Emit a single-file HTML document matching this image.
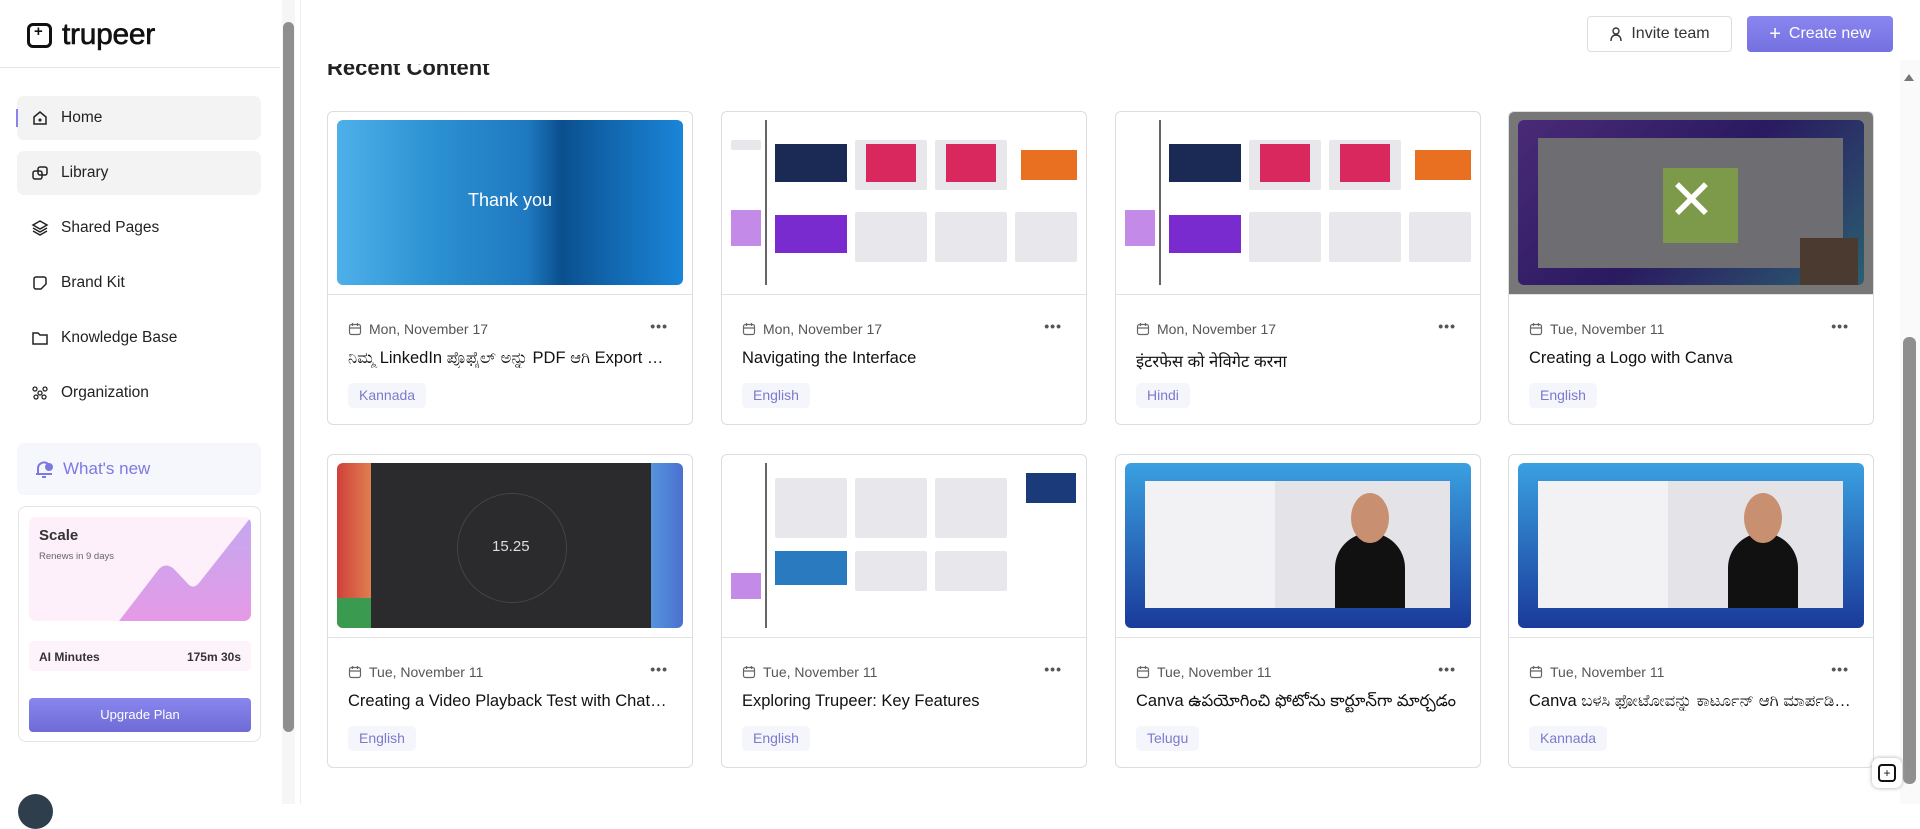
<!DOCTYPE html>
<html><head><meta charset="utf-8"><style>
*{box-sizing:border-box;margin:0;padding:0}
body{width:1920px;height:804px;overflow:hidden;background:#fff;font-family:"Liberation Sans","Noto Sans CJK SC",sans-serif;color:#111;position:relative}
.sb{position:absolute;left:0;top:0;width:281px;height:804px;background:#fff}
.logo{position:absolute;left:27px;top:18px;display:flex;align-items:center;gap:10px;font-size:30px;letter-spacing:-0.3px;color:#111;-webkit-text-stroke:0.6px #111}
.logo .ic{width:25px;height:25px;border:3px solid #111;border-radius:6px;position:relative;-webkit-text-stroke:0}
.logo .ic:after{content:"+";position:absolute;left:4px;top:-3px;font-size:15px;font-weight:bold}
.hl{position:absolute;left:0;top:67px;width:280px;border-top:1px solid #e5e5e5}
.nav{position:absolute;left:17px;width:244px;height:44px;border-radius:7px;display:flex;align-items:center;font-size:15.5px;color:#222}
.nav svg{position:absolute;left:14px;width:18px;height:18px}
.nav span{position:absolute;left:44px}
.act{background:#f3f3f4}
.bar:before{content:"";position:absolute;left:-1px;top:13px;height:18px;width:2px;background:#8b83e8}
.wn{position:absolute;left:17px;top:443px;width:244px;height:52px;border-radius:7px;background:#f6f6fd;color:#7d79e0;font-size:17px;display:flex;align-items:center}
.card0{position:absolute;left:18px;top:506px;width:243px;height:236px;border:1px solid #e4e4e4;border-radius:8px}
.sc{position:absolute;left:10px;top:10px;width:222px;height:104px;border-radius:7px;background:#fdf0fa;overflow:hidden}
.ai{position:absolute;left:10px;top:134px;width:222px;height:30px;background:#fdf4fb;border-radius:4px;font-size:12px;font-weight:bold;color:#333}
.up{position:absolute;left:10px;top:191px;width:222px;height:34px;border-radius:4px;background:linear-gradient(#8a86ef,#6f6bd6);color:#fff;font-size:13px;text-align:center;line-height:34px}
.scroll{position:absolute;left:282px;top:0;width:13px;height:804px;background:#f6f6f6}
.thumb{position:absolute;left:283px;top:22px;width:11px;height:710px;background:#8f8f8f;border-radius:6px}
.main{position:absolute;left:300px;top:0;width:1600px;height:804px;border-left:1px solid #eee}
.rc{position:absolute;left:327px;top:55px;font-size:22px;font-weight:bold;color:#222}
.hdr{position:absolute;left:301px;top:0;width:1599px;height:64px;background:#fff}
.btn{position:absolute;top:16px;height:36px;border-radius:4px;font-size:16px;display:flex;align-items:center;justify-content:center;gap:8px}
.card{position:absolute;width:366px;height:314px;border:1px solid #ddd;border-radius:6px;background:#fff;overflow:hidden}
.th{position:absolute;left:9px;top:8px;width:346px;height:165px;border-radius:6px;overflow:hidden}
.dv{position:absolute;left:0;top:182px;width:100%;border-top:1px solid #e3e3e3}
.dt{position:absolute;left:20px;top:209px;font-size:14px;color:#555;display:flex;align-items:center;gap:7px}
.dots{position:absolute;right:24px;top:206px;font-size:14px;color:#555;letter-spacing:1px;font-weight:bold}
.tt{position:absolute;left:20px;top:237px;font-size:16.5px;color:#111;white-space:nowrap;width:325px;overflow:hidden;text-overflow:ellipsis}
.tg{position:absolute;left:20px;top:271px;height:25px;padding:0 11px;border-radius:5px;background:#f5f5fc;color:#7d79cc;font-size:14px;line-height:25px}
.rs{position:absolute;left:1900px;top:60px;width:20px;height:744px;background:#fafafa}
.rt{position:absolute;left:1903px;top:337px;width:13px;height:447px;background:#8f8f8f;border-radius:6px}
.b{position:absolute;background:#e8e8ec;border-radius:2px}
</style></head><body>
<svg width="0" height="0" style="position:absolute"><defs><symbol id="cal" viewBox="0 0 14 14"><rect x="1.5" y="2.5" width="11" height="10" rx="2" fill="none" stroke="#666" stroke-width="1.2"/><path d="M1.5 6h11M4.5 1v3M9.5 1v3" stroke="#666" stroke-width="1.2"/></symbol></defs></svg>
<div class="sb">
<div class="logo"><div class="ic"></div>trupeer</div>
<div class="hl"></div>
<div class="nav act bar" style="top:96px"><svg viewBox="0 0 18 18" fill="none" stroke="#222" stroke-width="1.5"><path d="M3 8l6-5 6 5v7H3z"/><circle cx="9" cy="11" r=".8" fill="#222"/></svg><span>Home</span></div>
<div class="nav act" style="top:151px"><svg viewBox="0 0 18 18" fill="none" stroke="#222" stroke-width="1.5"><rect x="2" y="7" width="9" height="8" rx="2"/><rect x="7" y="3" width="9" height="8" rx="2"/></svg><span>Library</span></div>
<div class="nav" style="top:206px"><svg viewBox="0 0 18 18" fill="none" stroke="#222" stroke-width="1.5"><path d="M9 2l7 4-7 4-7-4z M2 9l7 4 7-4 M2 12l7 4 7-4"/></svg><span>Shared Pages</span></div>
<div class="nav" style="top:261px"><svg viewBox="0 0 18 18" fill="none" stroke="#222" stroke-width="1.5"><path d="M3 5a2 2 0 012-2h8a2 2 0 012 2v5l-5 5H5a2 2 0 01-2-2z"/></svg><span>Brand Kit</span></div>
<div class="nav" style="top:316px"><svg viewBox="0 0 18 18" fill="none" stroke="#222" stroke-width="1.5"><path d="M2 4h5l2 2h7v9H2z"/></svg><span>Knowledge Base</span></div>
<div class="nav" style="top:371px"><svg viewBox="0 0 18 18" fill="none" stroke="#222" stroke-width="1.3"><circle cx="4" cy="5" r="2"/><circle cx="14" cy="5" r="2"/><circle cx="9" cy="9" r="2"/><circle cx="5" cy="13" r="2"/><circle cx="13" cy="13" r="2"/></svg><span>Organization</span></div>
<div class="wn"><svg style="position:absolute;left:16px" width="22" height="22" viewBox="0 0 22 22" fill="none" stroke="#7d79e0" stroke-width="2"><path d="M5 15V10a6 6 0 0110-4M3 16h16M9 19h4"/><circle cx="16" cy="9" r="3" fill="#7d79e0"/></svg><span style="position:absolute;left:46px">What's new</span></div>
<div class="card0">
<div class="sc"><svg style="position:absolute;left:0;top:0" width="222" height="104"><defs><linearGradient id="g" x1="0" y1="0" x2="0" y2="1"><stop offset="0" stop-color="#c3a8f0"/><stop offset="1" stop-color="#e59ae6"/></linearGradient></defs><path d="M90 104L130 52Q137 45 145 52L160 68Q165 72 170 66L222 0V104Z" fill="url(#g)"/></svg>
<div style="position:absolute;left:10px;top:10px;font-size:15px;font-weight:bold;color:#333">Scale</div>
<div style="position:absolute;left:10px;top:34px;font-size:9.5px;color:#666">Renews in 9 days</div></div>
<div class="ai"><span style="position:absolute;left:10px;top:9px">AI Minutes</span><span style="position:absolute;right:10px;top:9px">175m 30s</span></div>
<div class="up">Upgrade Plan</div>
</div>
<div style="position:absolute;left:18px;top:794px;width:35px;height:35px;border-radius:50%;background:#2f3e4c"></div>
</div>
<div class="scroll"></div><div class="thumb"></div>
<div class="main"></div>
<div class="rc">Recent Content</div>
<div class="hdr"></div>
<div class="btn" style="left:1587px;width:145px;border:1px solid #ddd;color:#333"><svg width="14" height="16" viewBox="0 0 14 16" fill="none" stroke="#333" stroke-width="1.4"><circle cx="7" cy="5" r="3"/><path d="M2 15c0-4 2-6 5-6s5 2 5 6"/></svg>Invite team</div>
<div class="btn" style="left:1747px;width:146px;background:linear-gradient(#8a86ef,#7470e0);color:#fff"><span style="font-size:20px">+</span>Create new</div>

<!-- row 1 -->
<div class="card" style="left:327px;top:111px"><div class="th" style="background:linear-gradient(90deg,#4db0ea,#2a8fd0 30%,#1f79c0 55%,#0a4f8e 65%,#1268b0 80%,#1a85d8);"><div style="position:absolute;width:100%;top:70px;text-align:center;color:#fff;font-size:18px">Thank you</div></div><div class="dv"></div><div class="dt"><svg width="14" height="14"><use href="#cal"/></svg>Mon, November 17</div><div class="dots">•••</div><div class="tt">ನಿಮ್ಮ LinkedIn ಪ್ರೊಫೈಲ್ ಅನ್ನು PDF ಆಗಿ Export ಮಾಡುವುದು</div><div class="tg">Kannada</div></div>
<div class="card" style="left:721px;top:111px"><div class="th" style="background:#fff"><div style="position:absolute;left:34px;top:0;width:2px;height:165px;background:#666"></div><div style="position:absolute;left:44px;top:24px;width:72px;height:38px;background:#1b2a55"></div><div class="b" style="left:124px;top:20px;width:72px;height:50px"></div><div style="position:absolute;left:135px;top:24px;width:50px;height:38px;background:#d8285e"></div><div class="b" style="left:204px;top:20px;width:72px;height:50px"></div><div style="position:absolute;left:215px;top:24px;width:50px;height:38px;background:#d8285e"></div><div style="position:absolute;left:290px;top:30px;width:56px;height:30px;background:#e87020"></div><div style="position:absolute;left:44px;top:95px;width:72px;height:38px;background:#7a2bd0"></div><div class="b" style="left:124px;top:92px;width:72px;height:50px"></div><div class="b" style="left:204px;top:92px;width:72px;height:50px"></div><div class="b" style="left:284px;top:92px;width:62px;height:50px"></div><div style="position:absolute;left:0;top:90px;width:30px;height:36px;background:#c48ae8"></div><div class="b" style="left:0;top:20px;width:30px;height:10px"></div></div><div class="dv"></div><div class="dt"><svg width="14" height="14"><use href="#cal"/></svg>Mon, November 17</div><div class="dots">•••</div><div class="tt">Navigating the Interface</div><div class="tg">English</div></div>
<div class="card" style="left:1115px;top:111px"><div class="th" style="background:#fff"><div style="position:absolute;left:34px;top:0;width:2px;height:165px;background:#666"></div><div style="position:absolute;left:44px;top:24px;width:72px;height:38px;background:#1b2a55"></div><div class="b" style="left:124px;top:20px;width:72px;height:50px"></div><div style="position:absolute;left:135px;top:24px;width:50px;height:38px;background:#d8285e"></div><div class="b" style="left:204px;top:20px;width:72px;height:50px"></div><div style="position:absolute;left:215px;top:24px;width:50px;height:38px;background:#d8285e"></div><div style="position:absolute;left:290px;top:30px;width:56px;height:30px;background:#e87020"></div><div style="position:absolute;left:44px;top:95px;width:72px;height:38px;background:#7a2bd0"></div><div class="b" style="left:124px;top:92px;width:72px;height:50px"></div><div class="b" style="left:204px;top:92px;width:72px;height:50px"></div><div class="b" style="left:284px;top:92px;width:62px;height:50px"></div><div style="position:absolute;left:0;top:90px;width:30px;height:36px;background:#c48ae8"></div></div><div class="dv"></div><div class="dt"><svg width="14" height="14"><use href="#cal"/></svg>Mon, November 17</div><div class="dots">•••</div><div class="tt">इंटरफेस को नेविगेट करना</div><div class="tg">Hindi</div></div>
<div class="card" style="left:1508px;top:111px;"><div style="position:absolute;left:0;top:0;width:100%;height:182px;background:#777"></div><div class="th" style="background:linear-gradient(135deg,#4a2a78,#2a1a60 50%,#2a6070);"><div style="position:absolute;left:20px;top:18px;width:305px;height:130px;background:#6e6e72"></div><div style="position:absolute;left:145px;top:48px;width:75px;height:75px;background:#7c9a4a"></div><div style="position:absolute;left:282px;top:118px;width:58px;height:47px;background:#4a3a30"></div><div style="position:absolute;left:150px;top:50px;color:#fff;font-size:56px;line-height:60px">✕</div></div><div class="dv"></div><div class="dt"><svg width="14" height="14"><use href="#cal"/></svg>Tue, November 11</div><div class="dots">•••</div><div class="tt">Creating a Logo with Canva</div><div class="tg">English</div></div>

<!-- row 2 -->
<div class="card" style="left:327px;top:454px"><div class="th" style="background:linear-gradient(90deg,#d0403a,#e08050 10%,#2a2a2a 10%,#2a2a2a 88%,#5aa0e0 88%,#4a70d0)"><div style="position:absolute;left:34px;top:0;width:280px;height:165px;background:#2b2b2d"></div><div style="position:absolute;left:0;top:135px;width:34px;height:30px;background:#3a9a50"></div><div style="position:absolute;left:120px;top:30px;width:110px;height:110px;border:1px solid #444;border-radius:50%"></div><div style="position:absolute;left:155px;top:75px;color:#ddd;font-size:15px">15.25</div></div><div class="dv"></div><div class="dt"><svg width="14" height="14"><use href="#cal"/></svg>Tue, November 11</div><div class="dots">•••</div><div class="tt">Creating a Video Playback Test with ChatGPT</div><div class="tg">English</div></div>
<div class="card" style="left:721px;top:454px"><div class="th" style="background:#fff"><div style="position:absolute;left:34px;top:0;width:2px;height:165px;background:#666"></div><div class="b" style="left:44px;top:15px;width:72px;height:60px"></div><div class="b" style="left:124px;top:15px;width:72px;height:60px"></div><div class="b" style="left:204px;top:15px;width:72px;height:60px"></div><div style="position:absolute;left:295px;top:10px;width:50px;height:30px;background:#1b3a7a"></div><div style="position:absolute;left:44px;top:88px;width:72px;height:34px;background:#2a7ac0"></div><div class="b" style="left:124px;top:88px;width:72px;height:40px"></div><div class="b" style="left:204px;top:88px;width:72px;height:40px"></div><div style="position:absolute;left:0;top:110px;width:30px;height:26px;background:#c48ae8"></div></div><div class="dv"></div><div class="dt"><svg width="14" height="14"><use href="#cal"/></svg>Tue, November 11</div><div class="dots">•••</div><div class="tt">Exploring Trupeer: Key Features</div><div class="tg">English</div></div>
<div class="card" style="left:1115px;top:454px"><div class="th" style="background:linear-gradient(#3aa0e0,#1a3a9a)"><div style="position:absolute;left:20px;top:18px;width:305px;height:127px;background:#f2f2f4"></div><div style="position:absolute;left:150px;top:18px;width:175px;height:127px;background:#e4e4e8"></div><div style="position:absolute;left:210px;top:70px;width:70px;height:75px;border-radius:35px 35px 0 0;background:#111"></div><div style="position:absolute;left:226px;top:30px;width:38px;height:50px;border-radius:50%;background:#c89070"></div></div><div class="dv"></div><div class="dt"><svg width="14" height="14"><use href="#cal"/></svg>Tue, November 11</div><div class="dots">•••</div><div class="tt">Canva ఉపయోగించి ఫోటోను కార్టూన్‌గా మార్చడం</div><div class="tg">Telugu</div></div>
<div class="card" style="left:1508px;top:454px"><div class="th" style="background:linear-gradient(#3aa0e0,#1a3a9a)"><div style="position:absolute;left:20px;top:18px;width:305px;height:127px;background:#f2f2f4"></div><div style="position:absolute;left:150px;top:18px;width:175px;height:127px;background:#e4e4e8"></div><div style="position:absolute;left:210px;top:70px;width:70px;height:75px;border-radius:35px 35px 0 0;background:#111"></div><div style="position:absolute;left:226px;top:30px;width:38px;height:50px;border-radius:50%;background:#c89070"></div></div><div class="dv"></div><div class="dt"><svg width="14" height="14"><use href="#cal"/></svg>Tue, November 11</div><div class="dots">•••</div><div class="tt">Canva ಬಳಸಿ ಫೋಟೋವನ್ನು ಕಾರ್ಟೂನ್ ಆಗಿ ಮಾರ್ಪಡಿಸುವುದು</div><div class="tg">Kannada</div></div>

<div class="rs"></div><div class="rt"></div>
<div style="position:absolute;left:1904px;top:74px;width:0;height:0;border-left:5px solid transparent;border-right:5px solid transparent;border-bottom:7px solid #777"></div>
<div style="position:absolute;left:1872px;top:758px;width:30px;height:30px;border-radius:7px;background:#fff;box-shadow:0 0 4px #aaa"><div style="position:absolute;left:6px;top:6px;width:18px;height:18px;border:2px solid #111;border-radius:4px;font-size:12px;text-align:center;line-height:14px">+</div></div>
</body></html>
